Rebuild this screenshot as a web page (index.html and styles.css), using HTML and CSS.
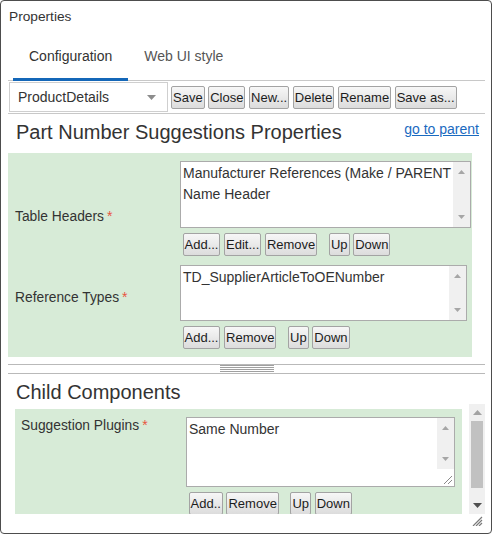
FILE: index.html
```html
<!DOCTYPE html>
<html>
<head>
<meta charset="utf-8">
<link rel="stylesheet" href="styles.css">
</head>
<body>
<div class="panel">
  <div class="panel-title">Properties</div>
  <div class="tabs">
    <div class="tab tab-active">Configuration</div>
    <div class="tab tab-muted">Web UI style</div>
  </div>
  <div class="toolbar">
    <div class="select">
      <span>ProductDetails</span>
      <svg class="select-arrow" width="9" height="5" viewBox="0 0 9 5"><path d="M0 0H9L4.5 5Z" fill="#8c8c8c"/></svg>
    </div>
    <button class="btn">Save</button>
    <button class="btn">Close</button>
    <button class="btn">New...</button>
    <button class="btn">Delete</button>
    <button class="btn">Rename</button>
    <button class="btn">Save as...</button>
  </div>
  <div class="section-head">
    <h2 class="section-title">Part Number Suggestions Properties</h2>
    <a class="link" href="#">go to parent</a>
  </div>
  <div class="form form-top">
    <div class="row">
      <div class="label label-r1">Table Headers<span class="req">*</span></div>
      <div class="field">
        <div class="list list-h67">
          <div class="list-text">
            <div>Manufacturer References (Make / PARENT</div>
            <div>Name Header</div>
          </div>
          <div class="vscroll">
            <div class="vtrack">
              <svg width="7" height="4" viewBox="0 0 7 4"><path d="M0 4H7L3.5 0Z" fill="#a6a6a6"/></svg>
              <svg width="7" height="4" viewBox="0 0 7 4"><path d="M0 0H7L3.5 4Z" fill="#a6a6a6"/></svg>
            </div>
          </div>
        </div>
        <div class="btns">
          <button class="btn">Add...</button>
          <button class="btn">Edit...</button>
          <button class="btn">Remove</button>
          <button class="btn btn-sep">Up</button>
          <button class="btn">Down</button>
        </div>
      </div>
    </div>
    <div class="row">
      <div class="label label-r2">Reference Types<span class="req">*</span></div>
      <div class="field">
        <div class="list list-h56">
          <div class="list-text">
            <div>TD_SupplierArticleToOENumber</div>
          </div>
          <div class="vscroll">
            <div class="vtrack">
              <svg width="7" height="4" viewBox="0 0 7 4"><path d="M0 4H7L3.5 0Z" fill="#a6a6a6"/></svg>
              <svg width="7" height="4" viewBox="0 0 7 4"><path d="M0 0H7L3.5 4Z" fill="#a6a6a6"/></svg>
            </div>
          </div>
        </div>
        <div class="btns">
          <button class="btn">Add...</button>
          <button class="btn">Remove</button>
          <button class="btn btn-sep">Up</button>
          <button class="btn">Down</button>
        </div>
      </div>
    </div>
  </div>
  <div class="splitter"><div class="grip"></div></div>
  <h2 class="section-title section-title-2">Child Components</h2>
  <div class="scroll-area">
    <div class="scroll-content">
      <div class="form form-child">
        <div class="row row-child">
          <div class="label label-r3">Suggestion Plugins<span class="req">*</span></div>
          <div class="field">
            <div class="list list-h70">
              <div class="list-text">
                <div>Same Number</div>
              </div>
              <div class="vscroll">
                <div class="vtrack">
                  <svg width="7" height="4" viewBox="0 0 7 4"><path d="M0 4H7L3.5 0Z" fill="#a6a6a6"/></svg>
                  <svg width="7" height="4" viewBox="0 0 7 4"><path d="M0 0H7L3.5 4Z" fill="#a6a6a6"/></svg>
                </div>
                <div class="resizer">
                  <svg width="17" height="17" viewBox="0 0 17 17"><path d="M15 7L7 15M15 11L11 15" stroke="#8a8a8a" stroke-width="1"/></svg>
                </div>
              </div>
            </div>
            <div class="btns">
              <button class="btn">Add..</button>
              <button class="btn">Remove</button>
              <button class="btn btn-sep">Up</button>
              <button class="btn">Down</button>
            </div>
          </div>
        </div>
      </div>
    </div>
    <div class="sbar">
      <div class="sbar-btn"><svg width="9" height="5" viewBox="0 0 9 5"><path d="M0 5H9L4.5 0Z" fill="#a3a3a3"/></svg></div>
      <div class="sbar-track"><div class="sbar-thumb"></div></div>
      <div class="sbar-btn"><svg width="9" height="5" viewBox="0 0 9 5"><path d="M0 0H9L4.5 5Z" fill="#505050"/></svg></div>
    </div>
  </div>
  <div class="footer">
    <svg width="11" height="10" viewBox="0 0 11 10"><path d="M10 1L1 10M10 4L4 10M10 7L7 10" stroke="#7a7a7a" stroke-width="1.2"/></svg>
  </div>
</div>
</body>
</html>
```
FILE: styles.css
```css
* { box-sizing: border-box; }
html, body { margin: 0; padding: 0; background: #fff; }
body { font-family: "Liberation Sans", Arial, sans-serif; color: #333; }

.panel {
  width: 492px;
  height: 534px;
  border: 1px solid #4d4d4d;
  border-radius: 4px;
  padding: 8px 6px 0 7px;
  display: flex;
  flex-direction: column;
  overflow: hidden;
}
.panel-title { font-size: 13.7px; line-height: 16px; padding-left: 1px; }

.tabs {
  display: flex;
  margin-top: 9px;
  padding-left: 5px;
  border-bottom: 1px solid #c8c8c8;
}
.tab { font-size: 14px; line-height: 16px; padding: 14px 16px; color: #333; }
.tab-active { border-bottom: 3px solid #1467b8; margin-bottom: -1px; }
.tab-muted { color: #555; }

.toolbar {
  display: flex;
  align-items: center;
  gap: 3.6px;
  padding: 1px 0 1px 1px;
  border-bottom: 1px solid #c8c8c8;
}
.select {
  width: 159px;
  height: 30px;
  border: 1px solid #cfcfcf;
  display: flex;
  align-items: center;
  justify-content: space-between;
  padding: 0 11px 0 8px;
  font-size: 14px;
  margin-right: -0.6px;
}
.select-arrow { display: block; }

.btn {
  font-family: "Liberation Sans", Arial, sans-serif;
  font-size: 13px;
  line-height: 21px;
  height: 23px;
  padding: 0 1px;
  border: 1px solid #a3a3a3;
  border-radius: 2px;
  background: linear-gradient(#f7f7f7, #dcdcdc);
  color: #1c1c1c;
  margin: 0;
}

.section-head {
  display: flex;
  justify-content: space-between;
  align-items: flex-start;
  margin-top: 7px;
  padding: 0 6px 0 8px;
}
.section-title { font-size: 20px; line-height: 23px; font-weight: normal; margin: 0; color: #333; }
.section-title-2 { margin-top: 7px; padding-left: 8px; }
.link { font-size: 14px; line-height: 16px; color: #1a6abf; text-decoration: underline; }

.form { background: #d7ebd7; }
.form-top { margin: 9px 13px 0 0; padding: 8px 5px 8px 0; display: flex; flex-direction: column; gap: 9px; }
.row { display: grid; grid-template-columns: 172px 1fr; }
.label { font-size: 13.8px; line-height: 16px; padding-left: 7px; color: #333; }
.label-r1 { padding-top: 47px; }
.label-r2 { padding-top: 24px; }
.req { color: #e8553f; margin-left: 3px; font-size: 14px; }

.list { border: 1px solid #ababab; background: #fff; display: flex; }
.list-h67 { height: 67px; }
.list-h56 { height: 56px; }
.list-h70 { height: 70px; }
.list-text {
  flex: 1;
  min-width: 0;
  padding: 1px 2px;
  font-size: 14px;
  line-height: 21px;
  white-space: nowrap;
  overflow: hidden;
  color: #333;
}
.vscroll { width: 17px; display: flex; flex-direction: column; }
.vtrack {
  flex: 1;
  background: #f0f0f0;
  display: flex;
  flex-direction: column;
  justify-content: space-between;
  align-items: center;
  padding: 8px 0;
}
.vtrack svg { display: block; }
.resizer { height: 17px; background: #fff; }
.resizer svg { display: block; }

.btns { display: flex; gap: 3.6px; margin-top: 5px; padding-left: 2.5px; }
.btn-sep { margin-left: 8px; }

.splitter {
  margin-top: 7px;
  height: 10px;
  border-top: 1px solid #b9b9b9;
  border-bottom: 1px solid #b9b9b9;
}
.grip {
  width: 54px;
  height: 7px;
  margin: 0 auto;
  background: repeating-linear-gradient(#a0a0a0 0 1px, transparent 1px 2px);
}

.scroll-area { display: flex; height: 110px; }
.scroll-content { flex: 1; overflow: hidden; }
.form-child { margin: 5px 7px 0 7px; padding: 8px 7px 8px 0; }
.row-child { grid-template-columns: 171px 1fr; }
.label-r3 { padding-left: 6px; }

.sbar { width: 16px; background: #f0f0f0; display: flex; flex-direction: column; }
.sbar-btn { height: 17px; display: flex; align-items: center; justify-content: center; }
.sbar-btn svg { display: block; }
.sbar-track { flex: 1; padding: 0 2px; }
.sbar-thumb { height: 67px; background: #c1c1c1; }

.footer { flex: 1; display: flex; justify-content: flex-end; padding: 2px 2px 0 0; }
.footer svg { display: block; }
```
